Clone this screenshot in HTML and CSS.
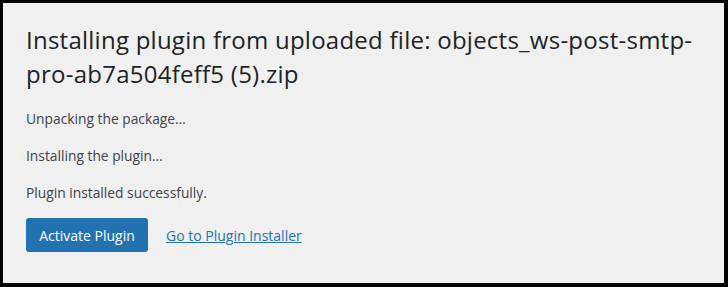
FILE: index.html
```html
<!DOCTYPE html>
<html>
<head>
<meta charset="utf-8">
<link rel="stylesheet" href="styles.css">
</head>
<body>
<div class="frame">
  <div class="wrap">
    <h1 class="title">Installing plugin from uploaded file: objects_ws-post-smtp-pro-ab7a504feff5 (5).zip</h1>
    <p class="step">Unpacking the package…</p>
    <p class="step">Installing the plugin…</p>
    <p class="step">Plugin installed successfully.</p>
    <div class="actions">
      <a class="btn" href="#">Activate Plugin</a>
      <a class="link" href="#">Go to Plugin Installer</a>
    </div>
  </div>
</div>
</body>
</html>
```
FILE: styles.css
```css
html, body {
  margin: 0;
  padding: 0;
  background: #000;
}
.frame {
  box-sizing: border-box;
  width: 728px;
  height: 287px;
  border-style: solid;
  border-color: #000;
  border-width: 3px 4px 4px 3px;
  background: #f0f0f1;
  font-family: "Open Sans", "Noto Sans", sans-serif;
}
.wrap {
  padding: 20px 20px 0 23px;
}
.title {
  margin: 0;
  font-size: 24px;
  font-weight: 400;
  line-height: 34px;
  letter-spacing: 0.25px;
  color: #1d2327;
}
.step {
  margin: 19px 0 0;
  font-size: 13.8px;
  line-height: 18px;
  color: #3c434a;
}
.actions {
  display: flex;
  align-items: center;
  gap: 18px;
  margin-top: 16px;
}
.btn {
  display: inline-flex;
  align-items: center;
  justify-content: center;
  width: 122px;
  height: 34px;
  border-radius: 3px;
  background: #2271b1;
  color: #fff;
  font-size: 14px;
  text-decoration: none;
}
.link {
  color: #2271b1;
  font-size: 14px;
  text-decoration: underline;
}
```
